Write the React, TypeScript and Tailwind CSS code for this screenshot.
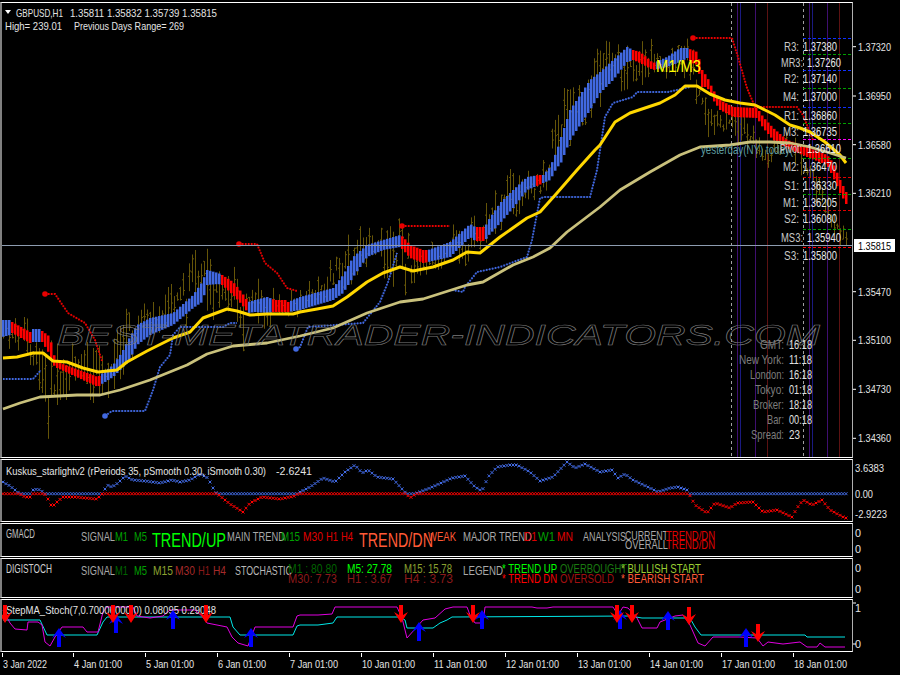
import type { ReactNode } from "react";

type Pt = [number, number];

const lerp = (pts: number[][], x: number, col = 1) => {
  if (x <= pts[0][0]) return pts[0][col];
  for (let i = 1; i < pts.length; i++) {
    if (x <= pts[i][0]) {
      const t = (x - pts[i - 1][0]) / (pts[i][0] - pts[i - 1][0]);
      return pts[i - 1][col] + (pts[i][col] - pts[i - 1][col]) * t;
    }
  }
  return pts[pts.length - 1][col];
};

const toPoints = (pts: Pt[]) => pts.map((p) => p.join(",")).join(" ");
const rnd = (n: number) => {
  const v = Math.sin(n * 12.9898) * 43758.5453;
  return v - Math.floor(v);
};

// one bar every 3px on the H1 chart
const barXs: number[] = [];
for (let x = 3; x <= 846; x += 3) barXs.push(x);

const yellowMa: Pt[] = [[3, 358], [17, 357], [33, 353], [43, 353], [53, 361], [67, 362], [83, 368], [98, 372], [117, 370], [127, 362], [147, 351], [173, 338], [190, 332], [203, 318], [227, 309], [237, 311], [250, 315], [267, 314], [293, 314], [300, 312], [317, 309], [333, 306], [347, 297], [367, 282], [383, 273], [400, 267], [413, 271], [433, 267], [453, 260], [467, 252], [480, 253], [500, 237], [527, 218], [540, 212], [557, 193], [577, 170], [595, 150], [600, 145], [615, 122], [630, 113], [645, 108], [660, 103], [675, 95], [685, 86], [697, 86], [710, 94], [725, 100], [740, 103], [755, 105], [765, 110], [775, 115], [790, 125], [800, 128], [810, 132], [825, 142], [840, 155], [846, 163]];

const tanMa: Pt[] = [[3, 409], [20, 403], [40, 397], [77, 395], [100, 395], [120, 390], [150, 380], [187, 365], [207, 354], [233, 346], [267, 343], [300, 336], [333, 328], [367, 313], [400, 302], [423, 299], [467, 285], [483, 282], [513, 265], [533, 257], [550, 248], [567, 232], [600, 207], [620, 190], [650, 172], [680, 155], [700, 147], [730, 145], [750, 142], [770, 142], [790, 143], [810, 147], [830, 153], [846, 158]];

// x, top, bottom of the ribbon
const ribbon: number[][] = [[2, 320, 337], [10, 320, 335], [12, 322, 333], [30, 332, 343], [32, 329, 342], [40, 329, 342], [42, 331, 342], [50, 337, 355], [53, 353, 365], [57, 362, 368], [98, 377, 387], [100, 375, 385], [113, 365, 377], [122, 352, 368], [128, 340, 362], [137, 325, 345], [150, 318, 335], [173, 313, 325], [193, 295, 308], [202, 282, 302], [207, 270, 285], [218, 273, 284], [222, 275, 285], [233, 282, 295], [242, 293, 305], [248, 302, 313], [255, 300, 312], [267, 297, 313], [275, 300, 312], [285, 300, 312], [288, 302, 312], [300, 297, 310], [333, 288, 300], [343, 275, 293], [353, 257, 277], [367, 245, 257], [383, 240, 250], [400, 235, 247], [403, 237, 250], [410, 245, 258], [423, 250, 263], [428, 250, 262], [450, 242, 257], [470, 224, 237], [475, 227, 241], [485, 227, 241], [487, 222, 237], [500, 203, 223], [513, 190, 208], [527, 177, 190], [539, 175, 185], [543, 175, 183], [550, 167, 180], [557, 150, 167], [560, 140, 165], [570, 110, 140], [580, 95, 125], [590, 80, 110], [600, 72, 93], [613, 60, 80], [627, 47, 62], [633, 50, 60], [640, 52, 63], [653, 63, 70], [667, 57, 67], [680, 48, 62], [687, 48, 58], [692, 50, 63], [697, 52, 65], [702, 70, 87], [707, 77, 87], [713, 90, 100], [720, 100, 110], [733, 107, 117], [757, 108, 118], [763, 117, 128], [773, 128, 140], [787, 140, 148], [807, 147, 157], [827, 155, 165], [833, 163, 177], [840, 180, 193], [846, 192, 204]];

const ribbonRed: Pt[] = [[11, 31], [41, 99], [220, 248], [272, 288], [401, 427], [475, 485], [537, 541], [633, 655], [688, 846]];

const highEnv: number[][] = [[3, 320], [20, 315], [40, 325], [50, 340], [60, 345], [80, 340], [100, 335], [105, 345], [120, 290], [130, 300], [150, 305], [175, 280], [195, 250], [205, 225], [215, 265], [245, 268], [265, 280], [280, 290], [300, 290], [340, 250], [353, 225], [370, 228], [400, 218], [420, 255], [445, 228], [470, 215], [490, 200], [500, 170], [520, 168], [540, 175], [555, 100], [570, 80], [590, 55], [605, 28], [612, 25], [625, 45], [645, 35], [665, 48], [680, 33], [695, 45], [700, 80], [715, 105], [730, 110], [745, 100], [760, 140], [790, 130], [810, 160], [846, 230]];
const lowEnv: number[][] = [[3, 345], [30, 365], [50, 447], [60, 400], [90, 400], [100, 410], [120, 380], [140, 345], [165, 335], [200, 320], [230, 320], [248, 367], [255, 330], [290, 325], [330, 300], [350, 285], [375, 270], [405, 298], [425, 275], [450, 265], [470, 270], [480, 265], [490, 240], [510, 222], [535, 200], [550, 190], [560, 160], [585, 125], [610, 95], [640, 85], [660, 85], [690, 80], [700, 120], [710, 145], [720, 140], [760, 160], [770, 175], [785, 145], [800, 175], [820, 210], [840, 255], [846, 258]];

const trails: { color: string; start?: Pt; pts: Pt[] }[] = [
  { color: "#e80000", start: [45, 294], pts: [[45, 294], [55, 294], [68, 313], [85, 323], [95, 340], [102, 361]] },
  { color: "#e80000", start: [239, 244], pts: [[239, 244], [257, 244], [265, 263], [277, 273], [287, 288], [297, 291]] },
  { color: "#e80000", start: [402, 226], pts: [[402, 226], [450, 226]] },
  { color: "#e80000", start: [693, 38], pts: [[693, 38], [732, 38], [738, 57], [747, 88], [755, 107], [797, 107], [803, 115], [813, 140]] },
  { color: "#4169e1", pts: [[3, 379], [33, 379], [41, 370]] },
  { color: "#4169e1", start: [105, 416], pts: [[105, 416], [112, 411], [145, 411], [153, 390], [160, 367], [170, 355], [173, 335], [180, 327], [223, 327], [230, 323], [237, 323]] },
  { color: "#4169e1", start: [296, 349], pts: [[296, 349], [300, 347], [308, 327], [363, 323], [380, 302], [388, 282], [397, 253]] },
  { color: "#4169e1", pts: [[452, 290], [463, 292], [465, 287], [477, 272], [500, 267], [527, 257], [532, 240], [540, 198], [545, 197], [590, 197], [597, 170], [602, 137], [605, 117], [613, 103], [633, 97], [637, 92], [668, 92], [690, 87]] },
];

const vLines: [number, string, string?][] = [
  [731.5, "#a0a0a0", "3 3"], [737.5, "#3f0f70"], [740.5, "#1a1a80"], [755.5, "#3f0f70"], [767.5, "#5c1212"],
  [803.5, "#a0a0a0", "3 3"], [809.5, "#3f0f70"], [812.5, "#1a1a80"], [827.5, "#3f0f70"], [839.5, "#5c1212"],
];

const pivotLines: [number, string][] = [
  [38, "#1030ff"], [54, "#00a000"], [70, "#1030ff"], [88, "#00a000"], [107, "#1030ff"], [123, "#00a000"], [139, "#ff00ff"],
  [158, "#00a000"], [177, "#e00000"], [194, "#00a000"], [210, "#e00000"], [229, "#00a000"], [247, "#ff0000"],
];

const pivots: [string, number, number, string, number, number][] = [
  ["R3:", 784, 15, "1.37380", 803, 34], ["MR3:", 781, 22, "1.37260", 807, 34], ["R2:", 784, 15, "1.37140", 803, 34],
  ["M4:", 783, 16, "1.37000", 803, 34], ["R1:", 784, 15, "1.36860", 803, 34], ["M3:", 783, 16, "1.36735", 803, 34],
  ["Pivot:", 780, 22, "1.36610", 807, 34], ["M2:", 783, 16, "1.36470", 803, 34], ["S1:", 784, 15, "1.36330", 803, 34],
  ["M1:", 783, 16, "1.36205", 803, 34], ["S2:", 784, 15, "1.36080", 803, 34], ["MS3:", 781, 22, "1.35940", 807, 34],
  ["S3:", 784, 15, "1.35800", 803, 34],
];
const pivotBase = [51, 66.7, 82.7, 101, 120, 135.7, 153, 171, 190, 206.7, 222.7, 241.7, 260];

const clock: [string, number, string, number][] = [
  ["GMT:", 24, "16:18", 23], ["New York:", 45, "11:18", 23], ["London:", 34, "16:18", 23], ["Tokyo:", 29, "01:18", 23],
  ["Broker:", 31, "18:18", 23], ["Bar:", 17, "00:18", 23], ["Spread:", 33, "23", 11],
];

const priceTicks: [string, number][] = [
  ["1.37320", 50.7], ["1.36950", 100], ["1.36580", 148.7], ["1.36210", 197.3], ["1.35470", 295.7], ["1.35100", 344.3], ["1.34730", 393.3], ["1.34360", 442.3],
];

const kuskusLine: number[][] = [[3, 482], [10, 486], [15, 490], [20, 494], [25, 497], [30, 497], [33, 490], [38, 489], [43, 492], [47, 497], [52, 507], [58, 501], [63, 497], [75, 497], [85, 498], [97, 499], [103, 493], [107, 485], [112, 487], [118, 483], [125, 476], [133, 480], [145, 481], [160, 483], [172, 480], [180, 482], [190, 480], [200, 474], [208, 478], [215, 492], [230, 504], [243, 512], [250, 503], [262, 497], [280, 499], [295, 496], [300, 492], [310, 487], [323, 478], [335, 482], [345, 472], [355, 465], [362, 473], [368, 470], [377, 477], [393, 479], [403, 490], [410, 498], [417, 493], [430, 488], [452, 478], [465, 476], [475, 487], [482, 491], [488, 477], [497, 467], [510, 465], [517, 465], [530, 472], [540, 481], [553, 477], [567, 462], [575, 468], [585, 464], [600, 472], [612, 470], [618, 478], [625, 474], [633, 480], [650, 488], [658, 492], [670, 488], [678, 487], [687, 490], [695, 505], [707, 513], [715, 503], [730, 508], [737, 503], [753, 502], [763, 512], [777, 510], [792, 517], [797, 508], [803, 500], [812, 505], [822, 500], [830, 510], [845, 518]];

const cyanLine: Pt[] = [[3, 620], [40, 620], [47, 635], [97, 635], [103, 622], [107, 617], [230, 617], [233, 627], [240, 635], [293, 635], [297, 626], [300, 625], [318, 625], [333, 623], [337, 617], [400, 617], [405, 620], [407, 628], [433, 628], [440, 623], [447, 620], [452, 617], [630, 616], [642, 618], [690, 618], [695, 627], [701, 635], [805, 635], [807, 637], [845, 637]];

const magentaLine: Pt[] = [[3, 610], [10, 623], [15, 629], [27, 630], [28, 622], [38, 622], [42, 625], [45, 642], [50, 646], [55, 637], [62, 627], [83, 627], [87, 632], [98, 632], [103, 612], [107, 607], [133, 607], [137, 616], [150, 618], [163, 616], [170, 610], [195, 610], [203, 617], [207, 623], [227, 627], [232, 637], [238, 643], [248, 646], [255, 627], [293, 627], [297, 616], [300, 615], [318, 615], [332, 614], [335, 607], [397, 607], [402, 618], [407, 638], [423, 620], [435, 618], [445, 609], [453, 607], [467, 607], [470, 615], [475, 623], [483, 623], [485, 607], [532, 607], [537, 608], [547, 608], [553, 607], [613, 607], [618, 615], [623, 607], [628, 608], [637, 618], [642, 628], [657, 628], [660, 622], [675, 616], [683, 615], [690, 625], [698, 643], [705, 646], [713, 637], [740, 637], [757, 638], [763, 646], [768, 642], [783, 644], [800, 642], [807, 647], [817, 647], [820, 643], [825, 647], [845, 647]];

const blueArrows: Pt[] = [[116, 614], [59, 628], [173, 610], [251, 628], [419, 622], [482, 610], [620, 610], [668, 611], [746, 628]];
const redArrows: Pt[] = [[5, 605], [113, 605], [131, 605], [206, 605], [401, 605], [473, 605], [617, 605], [632, 605], [689, 607], [758, 624]];

const dates: [string, number, number][] = [
  ["3 Jan 2022", 3, 44], ["4 Jan 01:00", 74, 48], ["5 Jan 01:00", 146, 48], ["6 Jan 01:00", 218, 48], ["7 Jan 01:00", 290, 48],
  ["10 Jan 01:00", 362, 53], ["11 Jan 01:00", 434, 53], ["12 Jan 01:00", 506, 53], ["13 Jan 01:00", 578, 53], ["14 Jan 01:00", 650, 53],
  ["17 Jan 01:00", 722, 53], ["18 Jan 01:00", 794, 53],
];

const GRAY = "#a8a8a8";
const GREEN = "#00a000";
const LIME = "#00ff00";
const RED = "#e00000";
const BROWN = "#a52a2a";
const OLIVE = "#9acd32";
const TOMATO = "#ff5a36";

// x, baseline, width, colour, size, text
type Label = [number, number, number, string, number, string];

const gmacdLabels: Label[] = [
  [6, 538, 29, "#c0c0c0", 12, "GMACD"], [81, 541, 34, GRAY, 13, "SIGNAL"], [115, 541, 13, GREEN, 13, "M1"], [134, 541, 13, GREEN, 13, "M5"],
  [152, 547, 74, LIME, 20, "TREND/UP"], [227, 541, 58, GRAY, 13, "MAIN TREND"], [281, 541, 19, GREEN, 13, "M15"], [303, 541, 20, RED, 13, "M30"],
  [326, 541, 12, RED, 13, "H1"], [341, 541, 12, RED, 13, "H4"], [359, 547, 74, TOMATO, 20, "TREND/DN"], [428, 541, 28, TOMATO, 13, "WEAK"],
  [463, 541, 69, GRAY, 13, "MAJOR TREND"], [524, 541, 13, RED, 13, "D1"], [538, 541, 17, GREEN, 13, "W1"], [557, 541, 16, RED, 13, "MN"],
  [583, 541, 43, GRAY, 13, "ANALYSIS"], [625, 540, 43, GRAY, 13, "CURRENT"], [625, 549, 43, GRAY, 13, "OVERALL"], [666, 540, 49, RED, 13, "TREND/DN"], [666, 549, 49, RED, 13, "TREND/DN"],
];

const digiLabels: Label[] = [
  [6, 573, 46, "#d0d0d0", 12, "DIGISTOCH"], [81, 575, 34, GRAY, 13, "SIGNAL"], [115, 575, 13, "#006400", 13, "M1"], [134, 575, 13, GREEN, 13, "M5"],
  [153, 575, 20, "#8aa030", 13, "M15"], [175, 575, 20, BROWN, 13, "M30"], [198, 575, 12, "#8b1a1a", 13, "H1"], [213, 575, 13, BROWN, 13, "H4"],
  [235, 575, 57, "#b8b8b8", 13, "STOCHASTIC"], [288, 573, 49, "#006400", 13, "M1 : 80.80"], [288, 583, 49, "#8b1a1a", 13, "M30: 7.73"],
  [347, 573, 45, LIME, 13, "M5: 27.78"], [347, 583, 45, "#8b1a1a", 13, "H1 : 3.67"], [404, 573, 48, "#8aa030", 13, "M15: 15.78"], [404, 583, 49, "#8b1a1a", 13, "H4 : 3.73"],
  [463, 575, 40, GRAY, 13, "LEGEND"], [502, 573, 55, LIME, 13, "* TREND UP"], [502, 583, 55, "#ff0000", 13, "* TREND DN"],
  [560, 573, 67, "#1a7a10", 13, "OVERBOUGHT"], [560, 583, 54, "#a01010", 13, "OVERSOLD"], [621, 573, 80, OLIVE, 13, "* BULLISH START"], [621, 583, 83, TOMATO, 13, "* BEARISH START"],
];

function T({ x, y, w, fill = "#e4e4e4", size = 11.5, children }: { x: number; y: number; w: number; fill?: string; size?: number; children: ReactNode }) {
  return (
    <text x={x} y={y} textLength={w} lengthAdjust="spacingAndGlyphs" fontSize={size} fill={fill}>
      {children}
    </text>
  );
}

function Pane({ top, height, axis, children }: { top: number; height: number; axis?: ReactNode; children: ReactNode }) {
  return (
    <div className="flex shrink-0" style={{ height }}>
      <div className="w-[853px] border-y border-y-white border-l-2 border-l-[#808080] border-r border-r-[#b0b0b0] overflow-hidden">
        <svg className="block" width={850} height={height - 2} viewBox={`2 ${top + 1} 850 ${height - 2}`}>
          {children}
        </svg>
      </div>
      <svg className="block w-[47px]" width={47} height={height} viewBox={`853 ${top} 47 ${height}`}>
        {axis}
      </svg>
    </div>
  );
}

function Candles() {
  return (
    <g stroke="#655508" strokeWidth={1} fill="none">
      {barXs.map((x, i) => {
        const hi = lerp(highEnv, x);
        const lo = lerp(lowEnv, x);
        const span = lo - hi;
        const mid = hi + span * (0.3 + rnd(i + 1) * 0.4);
        // most bars are short, a few reach the extremes
        const up = rnd(i + 200);
        const down = rnd(i + 300);
        const top = Math.max(hi, mid - span * (0.06 + up * up * 0.5));
        const bot = Math.min(lo, mid + span * (0.06 + down * down * 0.5));
        const open = top + (bot - top) * rnd(i + 400);
        const close = top + (bot - top) * rnd(i + 600);
        return (
          <path key={x} d={`M${x + 0.5} ${top}V${bot}M${x - 1} ${open}H${x}M${x + 1} ${close}H${x + 2}`} />
        );
      })}
    </g>
  );
}

function Ribbon() {
  return (
    <g>
      {barXs.map((x) => {
        const red = ribbonRed.some(([a, b]) => x >= a && x <= b);
        const top = lerp(ribbon, x, 1);
        const bot = lerp(ribbon, x, 2);
        return <rect key={x} x={x - 1} y={top} width={2.5} height={bot - top} fill={red ? "#ff0000" : "#4169e1"} />;
      })}
    </g>
  );
}

function crosses(pts: Pt[]) {
  return pts.map(([x, y]) => `M${x - 1.5} ${y - 1.5}L${x + 1.5} ${y + 1.5}M${x + 1.5} ${y - 1.5}L${x - 1.5} ${y + 1.5}`).join("");
}

function Kuskus() {
  const zero = 493.7;
  const xs = barXs.map((x) => [x, lerp(kuskusLine, x)] as Pt);
  const blue: Pt[] = [];
  const red: Pt[] = [];
  xs.forEach(([x, y]) => {
    if (y < zero) {
      blue.push([x, y]);
      red.push([x, zero]);
    } else {
      red.push([x, y]);
      blue.push([x, zero]);
    }
  });
  return (
    <g fill="none" strokeWidth={1}>
      <path d={crosses(blue)} stroke="#4169e1" />
      <path d={crosses(red)} stroke="#ff0000" />
    </g>
  );
}

function UpArrow({ x, y, color }: { x: number; y: number; color: string }) {
  return <polygon points={`${x},${y} ${x + 7},${y + 10} ${x + 2},${y + 7} ${x + 2},${y + 19} ${x - 2},${y + 19} ${x - 2},${y + 7} ${x - 7},${y + 10}`} fill={color} />;
}

function DownArrow({ x, y, color }: { x: number; y: number; color: string }) {
  return <polygon points={`${x - 2},${y} ${x + 2},${y} ${x + 2},${y + 10} ${x + 7},${y + 7} ${x},${y + 18} ${x - 7},${y + 7} ${x - 2},${y + 10}`} fill={color} />;
}

export default function App() {
  return (
    <div className="w-[900px] h-[675px] bg-black overflow-hidden flex flex-col gap-px pt-[2px] font-['Liberation_Sans',Arial,sans-serif]">
      <Pane
        top={2}
        height={456}
        axis={
          <g>
            {priceTicks.map(([label, y]) => (
              <g key={label}>
                <path d={`M853 ${y - 4}h3`} stroke="#ffffff" />
                <T x={858} y={y} w={33}>{label}</T>
              </g>
            ))}
            <rect x={854} y={239} width={41} height={13} fill="#ffffff" />
            <T x={858} y={249.5} w={33} fill="#000000">1.35815</T>
          </g>
        }
      >
        {vLines.map(([x, color, dash]) => (
          <line key={x} x1={x} x2={x} y1={3} y2={457} stroke={color} strokeDasharray={dash} />
        ))}
        <Candles />
        <Ribbon />
        {pivotLines.map(([y, color]) => (
          <line key={y} x1={803} x2={851} y1={y + 0.5} y2={y + 0.5} stroke={color} strokeDasharray="3 2" />
        ))}
        {trails.map((t, i) => (
          <g key={i} fill="none" stroke={t.color}>
            <polyline points={toPoints(t.pts)} strokeWidth={0.8} strokeOpacity={0.6} />
            <polyline points={toPoints(t.pts)} strokeWidth={2} strokeDasharray="1.5 1.5" />
            {t.start && <circle cx={t.start[0]} cy={t.start[1]} r={2.8} fill={t.color} stroke="none" />}
          </g>
        ))}
        <polyline points={toPoints(yellowMa)} fill="none" stroke="#ffd700" strokeWidth={3} strokeLinejoin="round" />
        <polyline points={toPoints(tanMa)} fill="none" stroke="#c9c17c" strokeWidth={2.8} strokeLinejoin="round" />
        <line x1={2} x2={852} y1={245.5} y2={245.5} stroke="#8d9cb0" />

        <text x={57} y={345} textLength={763} lengthAdjust="spacingAndGlyphs" fontSize={30} fontStyle="italic" fill="none" stroke="#7c7c7c" strokeWidth={0.6}>
          BEST-METATRADER-INDICATORS.COM
        </text>

        <polygon points="5,10 11,10 8,14" fill="#ffffff" />
        <T x={16} y={17} w={47}>GBPUSD,H1</T>
        <T x={70} y={17} w={147}>1.35811 1.35832 1.35739 1.35815</T>
        <T x={5} y={30} w={57}>High= 239.01</T>
        <T x={74} y={30} w={110}>Previous Days Range= 269</T>

        <T x={656} y={72} w={45} fill="#ffff00" size={17}>M1/M3</T>
        <T x={701} y={154} w={92} fill="#5f9ea0" size={13}>yesterday(NY) today(</T>
        {pivots.map(([label, lx, lw, value, vx, vw], i) => (
          <g key={label}>
            <T x={lx} y={pivotBase[i]} w={lw} fill="#c8c8c8" size={13}>{label}</T>
            <T x={vx} y={pivotBase[i]} w={vw} fill="#e8e8e8" size={13}>{value}</T>
          </g>
        ))}
        {clock.map(([label, lw, value, vw], i) => (
          <g key={label}>
            <T x={784 - lw} y={349 + i * 15} w={lw} fill="#7c7c7c" size={13}>{label}</T>
            <T x={789} y={349 + i * 15} w={vw} fill="#e0e0e0" size={13}>{value}</T>
          </g>
        ))}
      </Pane>

      <Pane
        top={459}
        height={63}
        axis={
          <g>
            <T x={855} y={472} w={29}>3.6383</T>
            <T x={855} y={498} w={18}>0.00</T>
            <T x={855} y={518} w={32}>-2.9223</T>
          </g>
        }
      >
        <Kuskus />
        <T x={6} y={475} w={260}>Kuskus_starlightv2  (rPeriods 35, pSmooth 0.30, iSmooth 0.30)</T>
        <T x={276} y={475} w={36}>-2.6241</T>
      </Pane>

      <Pane
        top={523}
        height={34}
        axis={
          <g>
            <T x={855} y={537} w={6}>0</T>
            <T x={855} y={553} w={6}>0</T>
          </g>
        }
      >
        {gmacdLabels.map(([x, y, w, fill, size, text], i) => (
          <T key={i} x={x} y={y} w={w} fill={fill} size={size}>{text}</T>
        ))}
      </Pane>

      <Pane
        top={558}
        height={40}
        axis={
          <g>
            <T x={855} y={572} w={6}>0</T>
            <T x={855} y={593} w={6}>0</T>
          </g>
        }
      >
        {digiLabels.map(([x, y, w, fill, size, text], i) => (
          <T key={i} x={x} y={y} w={w} fill={fill} size={size}>{text}</T>
        ))}
      </Pane>

      <Pane
        top={599}
        height={53}
        axis={
          <g>
            <path d="M853 603h3M853 644h3" stroke="#ffffff" />
            <T x={855} y={612} w={6}>1</T>
            <T x={855} y={648} w={6}>0</T>
          </g>
        }
      >
        <polyline points={toPoints(cyanLine)} fill="none" stroke="#00e8e8" strokeWidth={1} />
        <polyline points={toPoints(magentaLine)} fill="none" stroke="#e000e0" strokeWidth={1} />
        <T x={6} y={614} w={210}>StepMA_Stoch(7,0.70000000,0) 0.08095 0.29048</T>
        {blueArrows.map(([x, y]) => (
          <UpArrow key={x} x={x} y={y} color="#0000ff" />
        ))}
        {redArrows.map(([x, y]) => (
          <DownArrow key={x} x={x} y={y} color="#ff0000" />
        ))}
      </Pane>

      <svg className="block shrink-0" width={900} height={23} viewBox="0 652 900 23">
        {dates.map(([label, x, w]) => (
          <g key={label}>
            <path d={`M${x - 0.5} 652v4`} stroke="#ffffff" />
            <T x={x} y={667} w={w}>{label}</T>
          </g>
        ))}
      </svg>
    </div>
  );
}
